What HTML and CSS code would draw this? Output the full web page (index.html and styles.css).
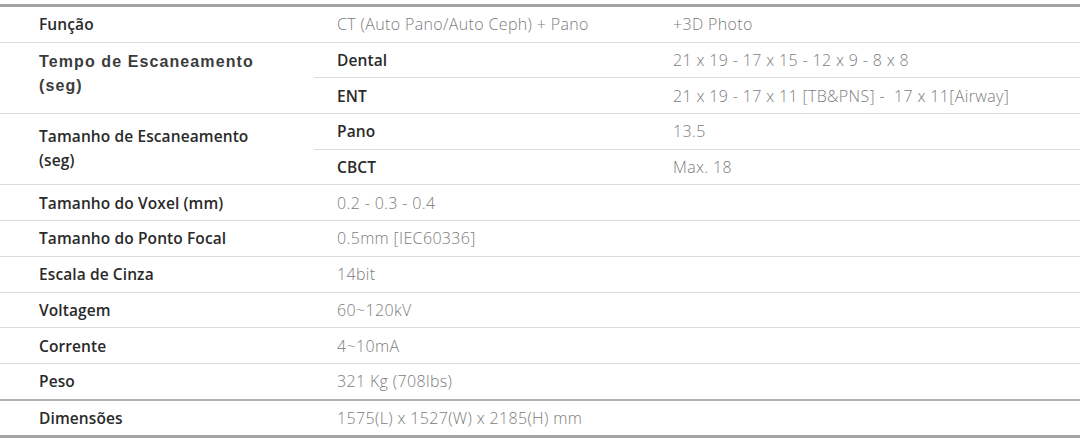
FILE: index.html
```html
<!DOCTYPE html>
<html lang="pt">
<head>
    <meta charset="UTF-8">
    <meta name="viewport" content="width=device-width, initial-scale=1.0">
    <title>Especificações</title>
    <link rel="stylesheet" href="styles.css">
</head>
<body>
    <div class="spec-wrap">
        <table class="spec">
            <colgroup>
                <col class="c-label">
                <col class="c-sub">
                <col class="c-val">
            </colgroup>
            <tr>
                <th>Função</th>
                <td>CT (Auto Pano/Auto Ceph) + Pano</td>
                <td>+3D Photo</td>
            </tr>
            <tr>
                <th rowspan="2" class="alt">Tempo de Escaneamento<br>(seg)</th>
                <td class="sub">Dental</td>
                <td>21 x 19 - 17 x 15 - 12 x 9 - 8 x 8</td>
            </tr>
            <tr>
                <td class="sub">ENT</td>
                <td>21 x 19 - 17 x 11 [TB&amp;PNS] -&nbsp; 17 x 11[Airway]</td>
            </tr>
            <tr>
                <th rowspan="2" class="two">Tamanho de Escaneamento<br>(seg)</th>
                <td class="sub">Pano</td>
                <td>13.5</td>
            </tr>
            <tr>
                <td class="sub">CBCT</td>
                <td>Max. 18</td>
            </tr>
            <tr>
                <th>Tamanho do Voxel (mm)</th>
                <td colspan="2">0.2 - 0.3 - 0.4</td>
            </tr>
            <tr>
                <th>Tamanho do Ponto Focal</th>
                <td colspan="2">0.5mm [IEC60336]</td>
            </tr>
            <tr>
                <th>Escala de Cinza</th>
                <td colspan="2">14bit</td>
            </tr>
            <tr>
                <th>Voltagem</th>
                <td colspan="2">60~120kV</td>
            </tr>
            <tr>
                <th>Corrente</th>
                <td colspan="2">4~10mA</td>
            </tr>
            <tr>
                <th>Peso</th>
                <td colspan="2">321 Kg (708lbs)</td>
            </tr>
            <tr class="last">
                <th>Dimensões</th>
                <td colspan="2">1575(L) x 1527(W) x 2185(H) mm</td>
            </tr>
        </table>
    </div>
</body>
</html>
```

FILE: styles.css
```css
body {
    margin: 0;
    background-color: #ffffff;
    font-family: "Open Sans", "Liberation Sans", Arial, sans-serif;
}
.spec-wrap {
    padding-top: 4px;
}
.spec {
    width: 100%;
    border-collapse: collapse;
    table-layout: fixed;
    border-top: 3px solid #a3a3a3;
    border-bottom: 3px solid #a3a3a3;
}
.c-label {
    width: 314px;
}
.c-sub {
    width: 336px;
}
.spec th,
.spec td {
    height: 34.7px;
    padding: 0 0 0 23px;
    border-bottom: 1px solid #dcdcdc;
    text-align: left;
    vertical-align: middle;
    white-space: nowrap;
}
.spec th {
    padding-left: 39px;
    font-size: 15.5px;
    font-weight: 600;
    letter-spacing: 0.1px;
    color: #2a2a2a;
    line-height: 24px;
}
.spec th.alt {
    font-family: "Liberation Sans", Arial, sans-serif;
    font-size: 16px;
    letter-spacing: 1.1px;
    font-weight: bold;
    color: #3c3c3c;
    padding-bottom: 8px;
}
.spec th.two {
    padding-bottom: 2px;
}
.spec td {
    font-size: 16px;
    font-weight: 300;
    letter-spacing: 0.35px;
    color: #7c7c7c;
}
.spec td.sub {
    font-size: 15.5px;
    font-weight: 600;
    letter-spacing: 0.1px;
    color: #2a2a2a;
}
.spec tr.last th,
.spec tr.last td {
    border-top: 2px solid #b0b0b0;
}
```
